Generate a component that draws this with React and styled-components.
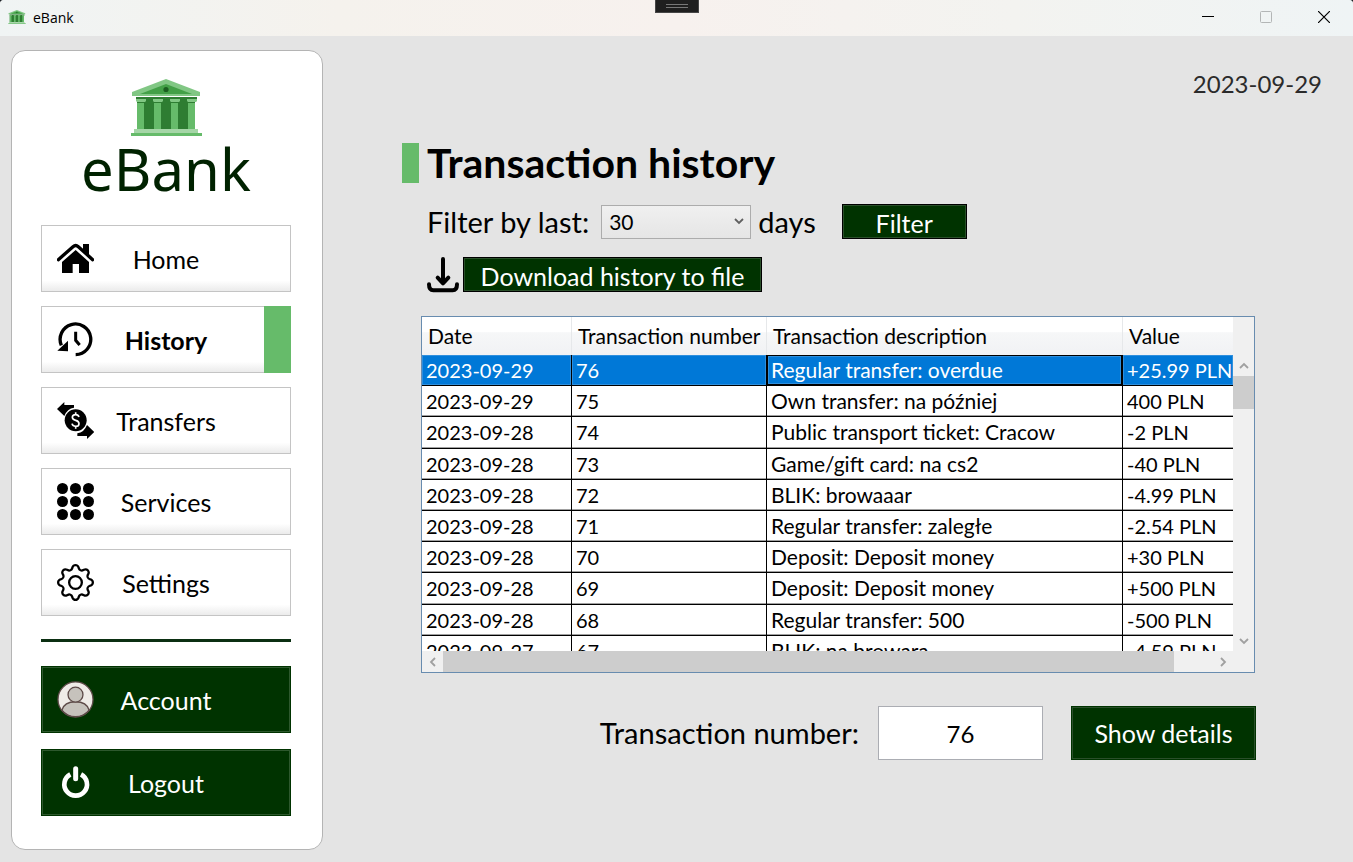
import React, { useState } from 'react';
import styled, { createGlobalStyle, css } from 'styled-components';
import { BsGear } from 'react-icons/bs';

const green = '#66bb6a';
const forest = '#003300';

const GlobalStyle = createGlobalStyle`
  *, *::before, *::after { box-sizing: border-box; }
  html { background: #1c2126; }
  body { margin: 0; font-family: Lato, "Noto Sans", sans-serif; color: #000; }
  button, input, select { font: inherit; color: inherit; margin: 0; }
`;

const Window = styled.div`
  min-height: 100vh;
  display: flex;
  flex-direction: column;
  background: #e4e4e4;
  border-radius: 4px 4px 0 0;
  overflow: hidden;
`;

const TitleBar = styled.header`
  height: 36px;
  display: grid;
  grid-template-columns: 1fr auto 1fr;
  background: linear-gradient(90deg, #f0f4f4 0%, #f5f2ed 25%, #f7f1ee 50%, #f3f3f0 75%, #eff4f5 100%);
`;

const AppName = styled.div`
  display: flex;
  align-items: center;
  gap: 7px;
  padding: 0 0 2px 8px;
  font: 14px "Open Sans", sans-serif;
`;

const DebugHandle = styled.div`
  width: 44px;
  height: 13px;
  display: grid;
  place-items: center;
  background: #1f1f1f;
  border: 1px solid #464646;
  border-top: 0;

  span {
    width: 22px;
    height: 4px;
    border: solid #777;
    border-width: 1px 0;
  }
`;

const WindowControls = styled.div`
  display: flex;
  justify-content: flex-end;
  padding-bottom: 2px;
`;

const WindowButton = styled.button`
  width: 58px;
  padding: 0;
  border: 0;
  background: none;
  display: grid;
  place-items: center;
  opacity: ${(p) => (p.disabled ? 0.25 : 1)};
`;

const Body = styled.div`
  flex: 1;
  display: flex;
  padding: 14px 0 12px 11px;
`;

const Sidebar = styled.aside`
  width: 312px;
  flex: none;
  padding: 28px 31px 32px 29px;
  background: #fff;
  border: 1px solid #b4b4b4;
  border-radius: 14px;
`;

const Brand = styled.div`
  display: flex;
  flex-direction: column;
  align-items: center;
  height: 146px;
  color: #002200;
  font: 58px/66px "Noto Sans", sans-serif;
`;

const NavList = styled.nav`
  display: flex;
  flex-direction: column;
  gap: ${(p) => p.$gap}px;
`;

const NavButton = styled.button`
  position: relative;
  height: 67px;
  padding: 0 15px;
  display: grid;
  grid-template-columns: 37px 1fr 37px;
  align-items: center;
  font-size: 25px;
  text-align: center;
  border: 1px solid #c4c4c4;
  background: linear-gradient(#fff 84%, #ebebeb);

  ${(p) => p.$active && css`
    font-weight: 700;
    &::after {
      content: '';
      position: absolute;
      top: -1px;
      right: -1px;
      bottom: -1px;
      width: 27px;
      background: ${green};
    }
  `}

  ${(p) => p.$dark && css`
    color: #fff;
    background: ${forest};
    border-color: ${forest};
    box-shadow: inset 0 0 0 1px #2d582d;
  `}
`;

const Divider = styled.hr`
  height: 3px;
  margin: 23px 0 24px;
  border: 0;
  background: #0b2f12;
`;

const Main = styled.main`
  flex: 1;
  min-width: 0;
  padding: 18px 98px 0;
`;

const Today = styled.div`
  margin-right: -67px;
  text-align: right;
  font-size: 24px;
  line-height: 32px;
  color: #2b2b2b;
`;

const Heading = styled.h1`
  display: flex;
  align-items: center;
  gap: 8px;
  height: 40px;
  margin: 43px 0 21px -19px;
  font-size: 41px;
  line-height: 40px;
  font-weight: 700;
  white-space: nowrap;

  &::before {
    content: '';
    width: 17px;
    height: 40px;
    background: ${green};
  }
`;

const Tools = styled.div`
  display: flex;
  align-items: center;
  height: 35px;
  margin-bottom: 18px;
  padding-left: 6px;
`;

const FieldLabel = styled.label`
  font-size: 29px;
  line-height: 36px;
  white-space: nowrap;
`;

const SelectBox = styled.span`
  position: relative;
  margin: 0 7px 0 12px;

  svg { position: absolute; right: 7px; top: 11px; pointer-events: none; }
`;

const Select = styled.select`
  display: block;
  width: 150px;
  height: 34px;
  padding: 0 7px;
  appearance: none;
  font-size: 21px;
  border: 1px solid #acacac;
  border-radius: 0;
  background: linear-gradient(#f0f0f0, #e5e5e5);
`;

const ActionButton = styled.button`
  width: ${(p) => p.$width}px;
  height: ${(p) => (p.$large ? 54 : 35)}px;
  padding: ${(p) => (p.$large ? 0 : 3)}px 0 0;
  margin-left: ${(p) => p.$space}px;
  color: #fff;
  font-size: 25px;
  line-height: 28px;
  white-space: nowrap;
  background: ${forest};
  border: 1px solid ${(p) => (p.$large ? forest : '#000')};
  box-shadow: inset 0 0 0 1px #2a4f2a;
`;

const GridPanel = styled.section`
  display: grid;
  grid-template-columns: minmax(0, 1fr) 21px;
  grid-template-rows: 334px 21px;
  margin-top: 24px;
  border: 1px solid #688caf;
  background: #f0f0f0;
`;

const Viewport = styled.div`
  overflow: hidden;
  background: #fff;
`;

const Table = styled.table`
  width: 100%;
  height: 350px;
  table-layout: fixed;
  border-collapse: separate;
  border-spacing: 0;
  font-size: 20px;
  line-height: 26px;
  text-align: left;
  white-space: nowrap;
`;

const Th = styled.th`
  width: ${(p) => p.$width};
  height: 38px;
  padding: 0 0 0 6px;
  font-size: 21px;
  font-weight: 400;
  border-right: 1px solid #e6e8ea;
  background: linear-gradient(#fff 40%, #f6f7f8 41%, #f1f2f4);

  &:last-child { border-right: 0; }
`;

const Td = styled.td`
  padding: 0 0 0 4px;
  font-size: ${(p) => (p.$text ? 21 : 20)}px;
  border-right: 1px solid #000;
  border-bottom: 1px solid #000;
  box-shadow: inset 0 -1px #a0a0a0;

  &:last-child { border-right: 0; }

  ${(p) => p.$selected && css`
    color: #fff;
    background: #0078d7;
    box-shadow: inset 0 0 0 1px #2f8fdd;
  `}

  ${(p) => p.$focused && css`
    box-shadow: inset 0 0 0 1px #000, inset 0 0 0 2px #2f8fdd;
  `}
`;

const Scrollbar = styled.div`
  display: flex;
  flex-direction: ${(p) => (p.$vertical ? 'column' : 'row')};
  padding-top: ${(p) => (p.$vertical ? 38 : 0)}px;
  background: #f0f0f0;
`;

const ScrollArrow = styled.button`
  flex: none;
  width: 21px;
  height: 21px;
  padding: 0;
  display: grid;
  place-items: center;
  border: 0;
  background: none;
  color: #a0a0a0;
`;

const Track = styled.div`
  flex: 1;
  min-width: 0;
`;

const Thumb = styled.div`
  background: #cdcdcd;
  width: ${(p) => (p.$vertical ? '100%' : '95%')};
  height: ${(p) => (p.$vertical ? '33px' : '100%')};
`;

const Details = styled.form`
  display: flex;
  align-items: center;
  justify-content: flex-end;
  margin: 33px -1px 0 0;
`;

const NumberInput = styled.input`
  width: 165px;
  height: 54px;
  margin-left: 19px;
  padding: 0;
  text-align: center;
  font-size: 24px;
  border: 1px solid #abadb3;
  background: #fff;
`;

const Chevron = ({ dir, color = 'currentColor' }) => {
  const paths = {
    up: 'M1 7 L5 3 L9 7',
    down: 'M1 3 L5 7 L9 3',
    left: 'M7 1 L3 5 L7 9',
    right: 'M3 1 L7 5 L3 9',
  };
  return (
    <svg width="10" height="10" viewBox="0 0 10 10" fill="none" stroke={color} strokeWidth="1.8" aria-hidden="true">
      <path d={paths[dir]} />
    </svg>
  );
};

const BankLogo = ({ width, height }) => (
  <svg width={width} height={height} viewBox="0 0 71 57" aria-hidden="true">
    <path d="M35 0 L69 13 V17 H1 V13 Z" fill="#81c784" />
    <path d="M35 5 L61 15 H9 Z" fill="#43a047" />
    <circle cx="35" cy="10.5" r="2.6" fill="#1b5e20" />
    <path d="M5 18 H66 V21 H64 V50 H6 V21 H5 Z" fill="#2e7d32" />
    {[6, 23, 40, 57].map((x) => (
      <g key={x}>
        <rect x={x} y="24" width="7" height="26" fill={green} />
        <path d={`M${x - 1} 20 h10 v2 l-1 1 h-8 l-1 -1 z`} fill="#81c784" />
      </g>
    ))}
    <rect x="3" y="50" width="64" height="4" fill="#a5d6a7" />
    <rect x="0" y="54" width="71" height="3" fill={green} />
  </svg>
);

const HomeIcon = () => (
  <svg width="37" height="37" viewBox="81 75 111 111" aria-hidden="true">
    <path d="M159 87 H177 V120 L159 104 Z" />
    <path d="M85 134 L129 95 Q137 88 145 95 L188 134" fill="none" stroke="#000" strokeWidth="10" strokeLinecap="round" />
    <path d="M137 105 L177 141 V174 H147 V147 H128 V174 H96 V141 Z" />
  </svg>
);

const HistoryIcon = () => (
  <svg width="37" height="37" viewBox="81 315 111 111" aria-hidden="true">
    <path d="M94 388 A46 46 0 1 1 137 416" fill="none" stroke="#000" strokeWidth="10" />
    <path d="M114 374 V406 L82 404 Z" />
    <path d="M137 347 V373 L149 387" fill="none" stroke="#000" strokeWidth="9" />
  </svg>
);

const TransfersIcon = () => (
  <svg width="37" height="37" viewBox="81 75 111 111" aria-hidden="true">
    <path d="M81 96 L103 75 V84 H132 V92 Q112 94 103 117 Z" />
    <path d="M193 165 L171 186 V177 H142 V169 Q162 167 171 144 Z" />
    <circle cx="137" cy="130" r="33" />
    <path d="M147 120 Q145 113 137 113 Q127 113 127 121 Q127 128 137 130 Q147 132 147 140 Q147 148 137 148 Q128 148 126 140 M137 106 V113 M137 148 V155" fill="none" stroke="#fff" strokeWidth="5" />
  </svg>
);

const ServicesIcon = () => (
  <svg width="37" height="37" viewBox="0 0 37 37" aria-hidden="true">
    {[5, 18, 31].map((y) => [5, 18, 31].map((x) => (
      <circle key={`${x}-${y}`} cx={x + 0.5} cy={y + 0.5} r="5.5" />
    )))}
  </svg>
);

const AccountIcon = () => (
  <svg width="37" height="37" viewBox="80 79 114 114" aria-hidden="true">
    <circle cx="137" cy="136" r="54" fill="#efebe7" />
    <path d="M95 169 C100 151 117 143 137 143 S174 151 179 169 A54 54 0 0 1 95 169 Z" fill="#c6c2bc" stroke="#5d4a48" strokeWidth="4" />
    <circle cx="137" cy="121" r="23" fill="#c6c2bc" stroke="#5d4a48" strokeWidth="4" />
    <circle cx="137" cy="136" r="54" fill="none" stroke="#5d4a48" strokeWidth="4" />
  </svg>
);

const LogoutIcon = () => (
  <svg width="37" height="37" viewBox="81 327 111 111" fill="none" stroke="#fff" aria-hidden="true">
    <path d="M121 358 A34 34 0 1 0 153 358" strokeWidth="14" />
    <path d="M137 341 V371" strokeWidth="15" strokeLinecap="round" />
  </svg>
);

const DownloadIcon = () => (
  <svg width="32" height="36" viewBox="111 381 96 108" fill="none" stroke="#000" strokeWidth="12" strokeLinecap="round" strokeLinejoin="round" aria-hidden="true">
    <path d="M159 387 V459 M143 443 L159 460 L175 443" />
    <path d="M117 463 Q117 481 130 481 H188 Q201 481 201 463" />
  </svg>
);

const navItems = [
  { label: 'Home', icon: <HomeIcon /> },
  { label: 'History', icon: <HistoryIcon />, active: true },
  { label: 'Transfers', icon: <TransfersIcon /> },
  { label: 'Services', icon: <ServicesIcon /> },
  { label: 'Settings', icon: <BsGear size={37} /> },
];

const accountItems = [
  { label: 'Account', icon: <AccountIcon /> },
  { label: 'Logout', icon: <LogoutIcon /> },
];

const columns = [
  ['Date', '150px'],
  ['Transaction number', '195px'],
  ['Transaction description', 'auto'],
  ['Value', '110px'],
];

const transactions = [
  ['2023-09-29', '76', 'Regular transfer: overdue', '+25.99 PLN'],
  ['2023-09-29', '75', 'Own transfer: na później', '400 PLN'],
  ['2023-09-28', '74', 'Public transport ticket: Cracow', '-2 PLN'],
  ['2023-09-28', '73', 'Game/gift card: na cs2', '-40 PLN'],
  ['2023-09-28', '72', 'BLIK: browaaar', '-4.99 PLN'],
  ['2023-09-28', '71', 'Regular transfer: zaległe', '-2.54 PLN'],
  ['2023-09-28', '70', 'Deposit: Deposit money', '+30 PLN'],
  ['2023-09-28', '69', 'Deposit: Deposit money', '+500 PLN'],
  ['2023-09-28', '68', 'Regular transfer: 500', '-500 PLN'],
  ['2023-09-27', '67', 'BLIK: na browara', '-4.59 PLN'],
];

export default function App() {
  const [selected, setSelected] = useState('76');

  return (
    <>
      <GlobalStyle />
      <Window>
        <TitleBar>
          <AppName><BankLogo width={18} height={14} />eBank</AppName>
          <DebugHandle><span /></DebugHandle>
          <WindowControls>
            <WindowButton aria-label="Minimize">
              <svg width="12" height="12"><path d="M0 5.5 H12" stroke="#000" /></svg>
            </WindowButton>
            <WindowButton aria-label="Maximize" disabled>
              <svg width="12" height="12"><rect x="0.5" y="0.5" width="11" height="11" rx="1" fill="none" stroke="#000" /></svg>
            </WindowButton>
            <WindowButton aria-label="Close">
              <svg width="12" height="12"><path d="M0 0 L12 12 M12 0 L0 12" stroke="#000" strokeWidth="1.2" /></svg>
            </WindowButton>
          </WindowControls>
        </TitleBar>
        <Body>
          <Sidebar>
            <Brand><BankLogo width={71} height={57} />eBank</Brand>
            <NavList $gap={14}>
              {navItems.map((item) => (
                <NavButton key={item.label} $active={item.active}>
                  {item.icon}<span>{item.label}</span>
                </NavButton>
              ))}
            </NavList>
            <Divider />
            <NavList $gap={16}>
              {accountItems.map((item) => (
                <NavButton key={item.label} $dark>
                  {item.icon}<span>{item.label}</span>
                </NavButton>
              ))}
            </NavList>
          </Sidebar>
          <Main>
            <Today>2023-09-29</Today>
            <Heading>Transaction history</Heading>
            <Tools>
              <FieldLabel htmlFor="days">Filter by last:</FieldLabel>
              <SelectBox>
                <Select id="days" defaultValue="30">
                  <option>7</option>
                  <option>30</option>
                  <option>90</option>
                </Select>
                <Chevron dir="down" color="#606060" />
              </SelectBox>
              <FieldLabel htmlFor="days">days</FieldLabel>
              <ActionButton $width={125} $space={26}>Filter</ActionButton>
            </Tools>
            <Tools>
              <DownloadIcon />
              <ActionButton $width={299} $space={4}>Download history to file</ActionButton>
            </Tools>
            <GridPanel>
              <Viewport>
                <Table>
                  <thead>
                    <tr>
                      {columns.map(([name, width]) => <Th key={name} $width={width}>{name}</Th>)}
                    </tr>
                  </thead>
                  <tbody>
                    {transactions.map((row) => (
                      <tr key={row[1]} onClick={() => setSelected(row[1])}>
                        {row.map((cell, i) => (
                          <Td
                            key={columns[i][0]}
                            $text={i === 2}
                            $selected={row[1] === selected}
                            $focused={row[1] === selected && i === 2}
                          >
                            {cell}
                          </Td>
                        ))}
                      </tr>
                    ))}
                  </tbody>
                </Table>
              </Viewport>
              <Scrollbar $vertical>
                <ScrollArrow aria-label="Scroll up"><Chevron dir="up" /></ScrollArrow>
                <Track><Thumb $vertical /></Track>
                <ScrollArrow aria-label="Scroll down"><Chevron dir="down" /></ScrollArrow>
              </Scrollbar>
              <Scrollbar>
                <ScrollArrow aria-label="Scroll left"><Chevron dir="left" /></ScrollArrow>
                <Track><Thumb /></Track>
                <ScrollArrow aria-label="Scroll right"><Chevron dir="right" /></ScrollArrow>
              </Scrollbar>
            </GridPanel>
            <Details onSubmit={(e) => e.preventDefault()}>
              <FieldLabel htmlFor="number">Transaction number:</FieldLabel>
              <NumberInput id="number" value={selected} onChange={(e) => setSelected(e.target.value)} />
              <ActionButton $large $width={185} $space={28}>Show details</ActionButton>
            </Details>
          </Main>
        </Body>
      </Window>
    </>
  );
}
